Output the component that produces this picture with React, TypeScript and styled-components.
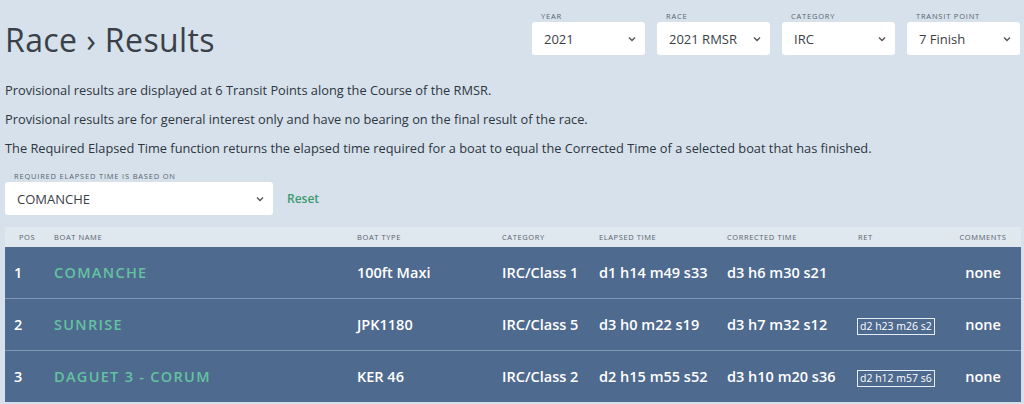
import React from "react";
import styled, { createGlobalStyle } from "styled-components";

const Global = createGlobalStyle`
  html, body { margin: 0; padding: 0; background: #d6e1eb; }
  body { font-family: "Open Sans", "Noto Sans", sans-serif; color: #2e3640; }
`;

const Page = styled.div`
  width: 1024px;
  height: 404px;
  overflow: hidden;
  box-sizing: border-box;
  padding: 0 4px 0 5px;
`;

const TopBar = styled.div`
  display: flex;
  justify-content: space-between;
  align-items: flex-start;
  height: 74px;
`;

const Title = styled.h1`
  margin: 18px 0 0 0;
  font-size: 32px;
  font-weight: 500;
  color: #3a4048;
  letter-spacing: 0.4px;
`;

const Filters = styled.div`
  display: flex;
  gap: 12px;
  padding-top: 10px;
`;

const Field = styled.div<{ $w: number }>`
  display: flex;
  flex-direction: column;
  width: ${(p) => p.$w}px;
`;

const Label = styled.div`
  font-size: 7.5px;
  letter-spacing: 0.8px;
  text-transform: uppercase;
  color: #5a636d;
  padding-left: 9px;
  height: 12px;
  line-height: 12px;
`;

const SelectBox = styled.div`
  height: 33px;
  background: #fff;
  border-radius: 3px;
  display: flex;
  align-items: center;
  justify-content: space-between;
  padding: 0 9px 0 12px;
  font-size: 13px;
  color: #3a4048;
  box-sizing: border-box;
`;

const Chevron = () => (
  <svg width="8" height="6" viewBox="0 0 8 6">
    <path d="M1 1.5 L4 4.5 L7 1.5" fill="none" stroke="#555" strokeWidth="1.4" />
  </svg>
);

const Para = styled.p`
  margin: 0;
  font-size: 12.8px;
  line-height: 29px;
  color: #2e3640;
`;

const Texts = styled.div`
  padding-top: 2px;
`;

const BasedRow = styled.div`
  display: flex;
  align-items: flex-end;
  gap: 14px;
  margin-top: 7px;
`;

const Reset = styled.span`
  color: #3f9a6e;
  font-size: 12px;
  font-weight: 600;
  line-height: 33px;
`;

const Table = styled.div`
  margin-top: 12px;
  width: 1016px;
`;

const cols = "49px 303px 145px 97px 128px 130px 88px 76px";

const HeadRow = styled.div`
  display: grid;
  grid-template-columns: ${cols};
  height: 20px;
  align-items: center;
  background: #dfe7ef;
`;

const HeadCell = styled.div<{ $center?: boolean; $pl?: number }>`
  font-size: 7.5px;
  letter-spacing: 0.6px;
  text-transform: uppercase;
  color: #5a636d;
  padding-left: ${(p) => p.$pl ?? 0}px;
  text-align: ${(p) => (p.$center ? "center" : "left")};
`;

const Row = styled.div`
  display: grid;
  grid-template-columns: ${cols};
  height: 51px;
  align-items: center;
  background: #4f6a8f;
  border-top: 1px solid #7f97b5;
  &:first-of-type { border-top: none; }
`;

const Cell = styled.div<{ $center?: boolean; $pl?: number }>`
  color: #ffffff;
  font-size: 14.5px;
  font-weight: 600;
  white-space: nowrap;
  padding-left: ${(p) => p.$pl ?? 0}px;
  text-align: ${(p) => (p.$center ? "center" : "left")};
`;

const Name = styled(Cell)`
  color: #63c2a0;
  text-transform: uppercase;
  letter-spacing: 1.3px;
`;

const RetBox = styled.span`
  display: inline-block;
  border: 1px solid #e6ecf3;
  font-size: 10.5px;
  font-weight: 500;
  padding: 1px 2px;
  line-height: 13px;
  color: #fff;
`;

const rows = [
  { pos: "1", name: "COMANCHE", type: "100ft Maxi", cat: "IRC/Class 1", el: "d1 h14 m49 s33", co: "d3 h6 m30 s21", ret: "" },
  { pos: "2", name: "SUNRISE", type: "JPK1180", cat: "IRC/Class 5", el: "d3 h0 m22 s19", co: "d3 h7 m32 s12", ret: "d2 h23 m26 s2" },
  { pos: "3", name: "DAGUET 3 - CORUM", type: "KER 46", cat: "IRC/Class 2", el: "d2 h15 m55 s52", co: "d3 h10 m20 s36", ret: "d2 h12 m57 s6" },
];

const Body = styled.div``;

export default function App() {
  return (
    <>
      <Global />
      <Page>
        <TopBar>
          <Title>Race › Results</Title>
          <Filters>
            <Field $w={113}><Label>Year</Label><SelectBox>2021<Chevron /></SelectBox></Field>
            <Field $w={113}><Label>Race</Label><SelectBox>2021 RMSR<Chevron /></SelectBox></Field>
            <Field $w={113}><Label>Category</Label><SelectBox>IRC<Chevron /></SelectBox></Field>
            <Field $w={113}><Label>Transit Point</Label><SelectBox>7 Finish<Chevron /></SelectBox></Field>
          </Filters>
        </TopBar>
        <Texts>
          <Para>Provisional results are displayed at 6 Transit Points along the Course of the RMSR.</Para>
          <Para>Provisional results are for general interest only and have no bearing on the final result of the race.</Para>
          <Para>The Required Elapsed Time function returns the elapsed time required for a boat to equal the Corrected Time of a selected boat that has finished.</Para>
        </Texts>
        <BasedRow>
          <Field $w={268}>
            <Label>Required elapsed time is based on</Label>
            <SelectBox>COMANCHE<Chevron /></SelectBox>
          </Field>
          <Reset>Reset</Reset>
        </BasedRow>
        <Table>
          <HeadRow>
            <HeadCell $pl={14}>Pos</HeadCell>
            <HeadCell>Boat Name</HeadCell>
            <HeadCell>Boat Type</HeadCell>
            <HeadCell>Category</HeadCell>
            <HeadCell>Elapsed Time</HeadCell>
            <HeadCell>Corrected Time</HeadCell>
            <HeadCell $pl={1}>Ret</HeadCell>
            <HeadCell $center>Comments</HeadCell>
          </HeadRow>
          <Body>
            {rows.map((r) => (
              <Row key={r.pos}>
                <Cell $pl={9}>{r.pos}</Cell>
                <Name>{r.name}</Name>
                <Cell>{r.type}</Cell>
                <Cell>{r.cat}</Cell>
                <Cell>{r.el}</Cell>
                <Cell>{r.co}</Cell>
                <Cell>{r.ret && <RetBox>{r.ret}</RetBox>}</Cell>
                <Cell $center>none</Cell>
              </Row>
            ))}
          </Body>
        </Table>
      </Page>
    </>
  );
}
